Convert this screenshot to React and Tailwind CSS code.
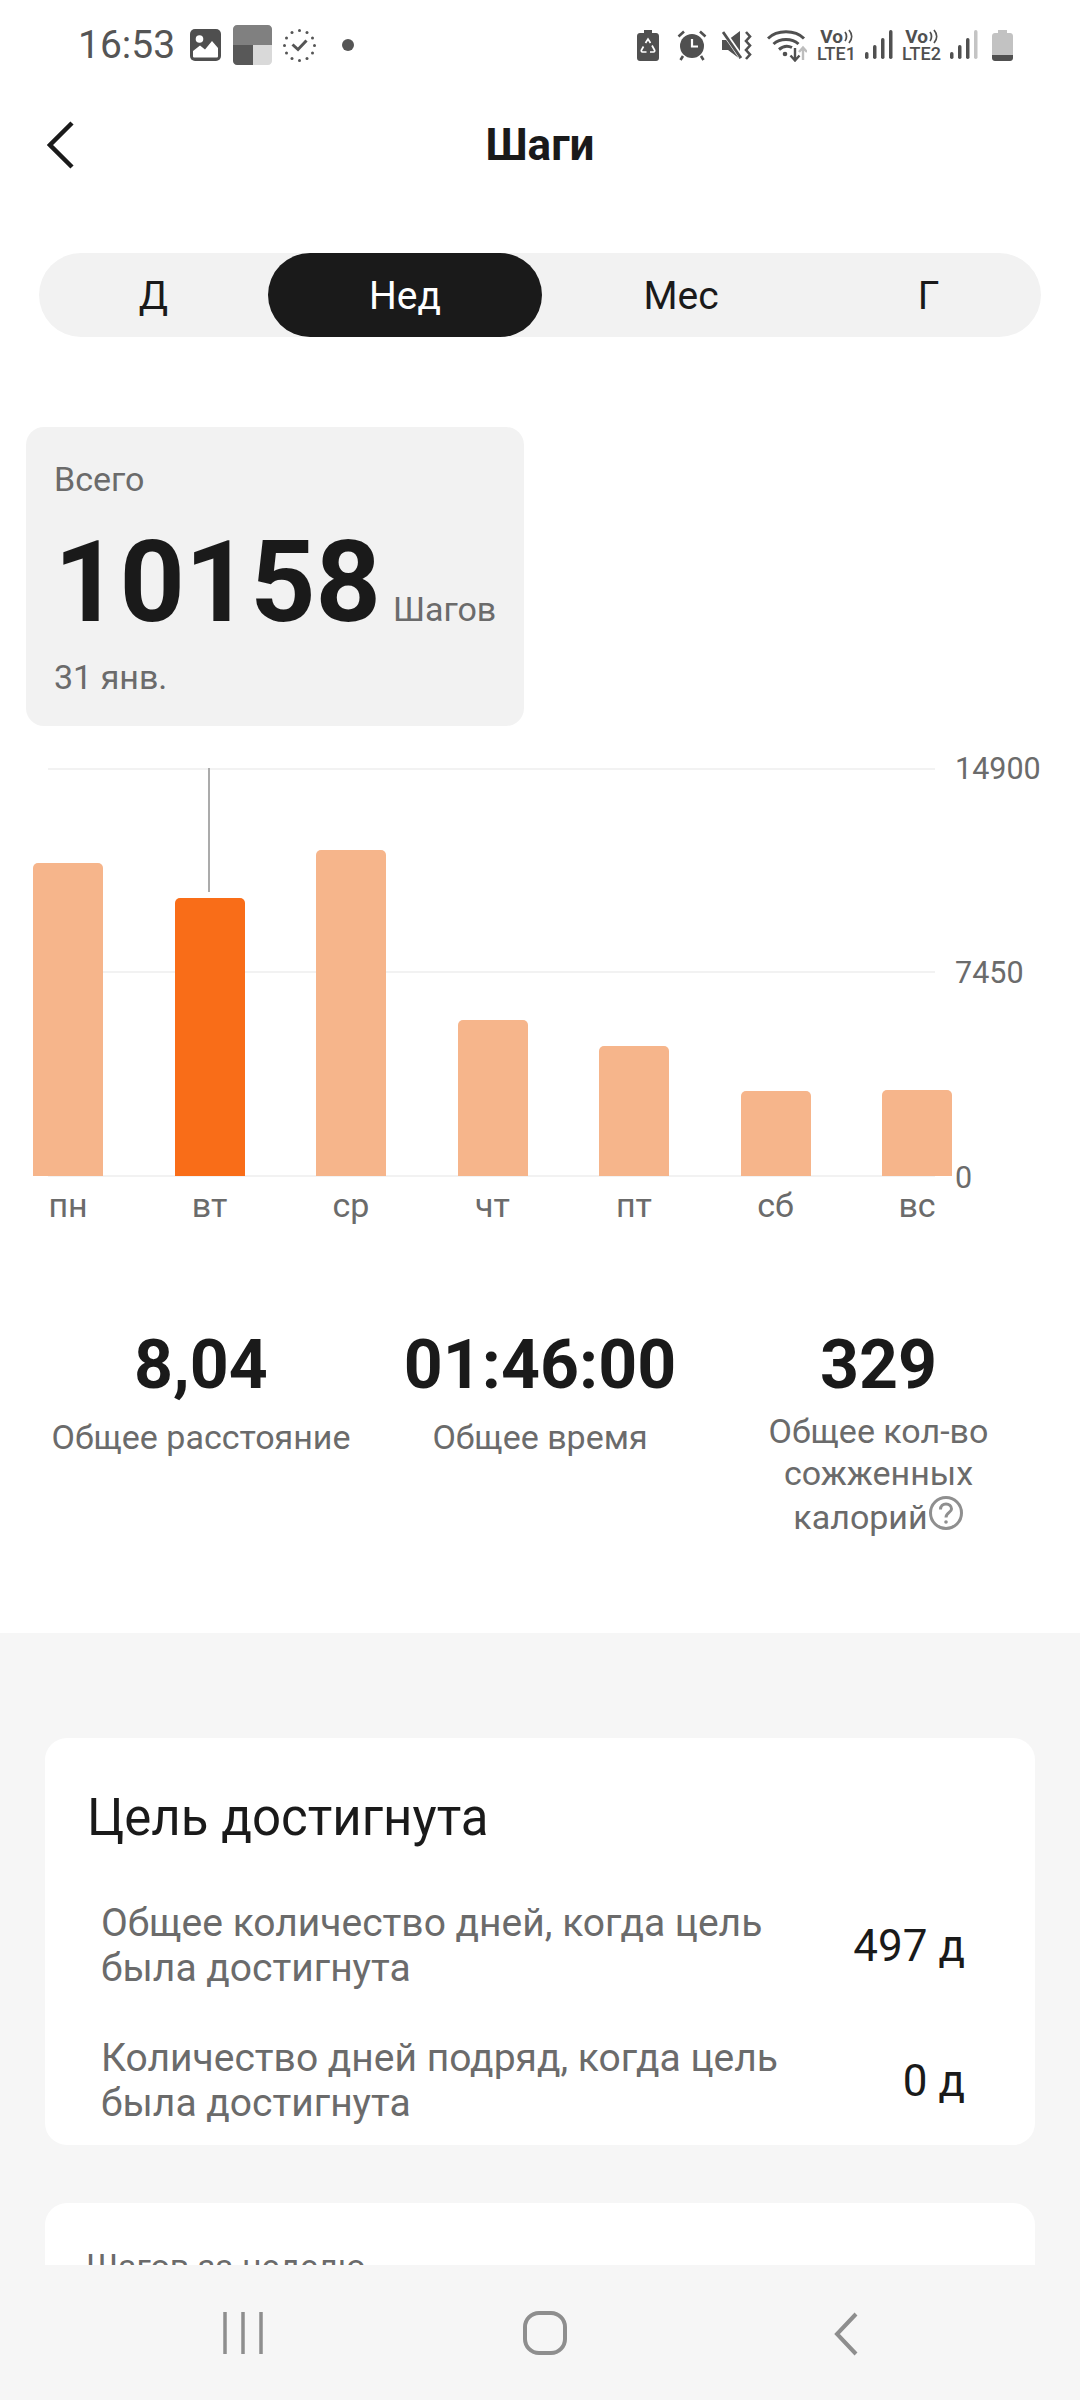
const bars = [
  { d: 'пн', h: 313 },
  { d: 'вт', h: 278, active: true },
  { d: 'ср', h: 326 },
  { d: 'чт', h: 156 },
  { d: 'пт', h: 130 },
  { d: 'сб', h: 85 },
  { d: 'вс', h: 86 },
];

function ImageIcon() {
  return (
    <svg width="31" height="32" viewBox="0 0 31 32">
      <rect width="31" height="32" rx="5" fill="#4f4f4f" />
      <circle cx="9.500" cy="10" r="3.800" fill="#fff" />
      <path d="M3 27.500V22L10 16.500L15 20.500L22 12L28 19V27C28 28 27.500 28.500 26.500 28.500H4.500C3.500 28.500 3 28 3 27.500Z" fill="#fff" />
    </svg>
  );
}

function WidgetIcon() {
  return (
    <svg width="39" height="40" viewBox="0 0 39 40">
      <path d="M0 20V4C0 1.800 1.800 0 4 0H35C37.200 0 39 1.800 39 4V20Z" fill="#808080" />
      <path d="M0 20H20V40H4C1.800 40 0 38.200 0 36Z" fill="#585858" />
      <path d="M20 20H39V36C39 38.200 37.200 40 35 40H20Z" fill="#d9d9d9" />
    </svg>
  );
}

function DottedClock() {
  const dots = Array.from({ length: 12 }, (_, i) => {
    const a = (i * Math.PI) / 6;
    return <circle key={i} cx={16.500 + 15 * Math.sin(a)} cy={16.500 - 15 * Math.cos(a)} r="1.500" fill="#555" />;
  });
  return (
    <svg width="33" height="33" viewBox="0 0 33 33">
      {dots}
      <path d="M9.500 15.500L15 20.500L23.500 11.500" fill="none" stroke="#555" strokeWidth="3" />
    </svg>
  );
}

function BatterySaver() {
  return (
    <svg width="22" height="31" viewBox="0 0 22 31">
      <path d="M7 0H15V3H19C20.700 3 22 4.300 22 6V28C22 29.700 20.700 31 19 31H3C1.300 31 0 29.700 0 28V6C0 4.300 1.300 3 3 3H7Z" fill="#505050" />
      <path d="M8.500 13L11 9L13.500 13M15 15.500L17.500 20C18 21 17.500 22 16.500 22H13M9.500 22H5.500C4.500 22 4 21 4.500 20L6.500 16.500" fill="none" stroke="#fff" strokeWidth="1.700" />
    </svg>
  );
}

function AlarmIcon() {
  return (
    <svg width="30" height="31" viewBox="0 0 30 31">
      <circle cx="15" cy="16" r="12" fill="#505050" />
      <path d="M15 9V16.500H21" fill="none" stroke="#fff" strokeWidth="2.200" />
      <path d="M1.500 6.500L7 1.500M28.500 6.500L23 1.500M6 26L3.500 30M24 26L26.500 30" fill="none" stroke="#505050" strokeWidth="2.600" />
    </svg>
  );
}

function MuteVibrate() {
  return (
    <svg width="30" height="30" viewBox="0 0 30 30">
      <path d="M0 10H6L18 1V29L6 20H0Z" fill="#505050" />
      <path d="M1 1L19 27" stroke="#fff" strokeWidth="5" />
      <path d="M1 2L19 28" stroke="#505050" strokeWidth="2.800" />
      <path d="M24 2L28 6.500L24 11L28 15.500L24 20L28 24.500L24 29" fill="none" stroke="#505050" strokeWidth="2.600" />
    </svg>
  );
}

function WifiIcon() {
  return (
    <svg width="40" height="33" viewBox="0 0 40 33">
      <path d="M1 9.500C10 0.500 28 0.500 37 9.500" fill="none" stroke="#505050" strokeWidth="3" />
      <path d="M6.500 15C13 9 25 9 31.500 15" fill="none" stroke="#505050" strokeWidth="3" />
      <path d="M12 20.500C16 17 21 16.500 25 18.500" fill="none" stroke="#505050" strokeWidth="3" />
      <circle cx="18" cy="25" r="2.300" fill="#505050" />
      <path d="M28 19V31M23.500 26.500L28 31.500L32.500 26.500" fill="none" stroke="#505050" strokeWidth="2.400" />
      <path d="M36 31V19M32 23L36 18.500L40 23" fill="none" stroke="#bdbdbd" strokeWidth="2.400" />
    </svg>
  );
}

function VoLte({ n }) {
  return (
    <div className="flex flex-col items-center text-[#505050] font-medium w-[39px]">
      <div className="flex items-center h-[15px] leading-[15px] text-[19px] font-bold">
        Vo
        <svg width="9" height="15" viewBox="0 0 9 15" className="ml-[1px]">
          <path d="M1 3C3 5.500 3 9.500 1 12M5 1C8.500 5 8.500 10 5 14" fill="none" stroke="#505050" strokeWidth="1.800" />
        </svg>
      </div>
      <div className="h-[14px] leading-[14px] text-[18px] mt-[3px] whitespace-nowrap">LTE{n}</div>
    </div>
  );
}

function SignalIcon({ faded }) {
  return (
    <svg width="28" height="30" viewBox="0 0 28 30">
      <rect x="0" y="22" width="3.500" height="7" rx="1.700" fill="#505050" />
      <rect x="8" y="15" width="3.500" height="14" rx="1.700" fill="#505050" />
      <rect x="16" y="8" width="3.500" height="21" rx="1.700" fill="#505050" />
      <rect x="24" y="0" width="3.500" height="29" rx="1.700" fill={faded ? '#c4c4c4' : '#505050'} />
    </svg>
  );
}

function BatteryIcon() {
  return (
    <svg width="21" height="31" viewBox="0 0 21 31">
      <path d="M6 0H15V3H18C19.700 3 21 4.300 21 6V25H0V6C0 4.300 1.300 3 3 3H6Z" fill="#c2c2c2" />
      <path d="M0 25H21V28C21 29.700 19.700 31 18 31H3C1.300 31 0 29.700 0 28Z" fill="#505050" />
    </svg>
  );
}

function StatusBar() {
  return (
    <div className="h-[90px] flex items-center justify-between pl-[78px] pr-[67px]">
      <div className="flex items-center">
        <span className="text-[39px] leading-none text-[#555] w-[112px]">16:53</span>
        <ImageIcon />
        <div className="w-[12px]" />
        <WidgetIcon />
        <div className="w-[11px]" />
        <DottedClock />
        <div className="w-[26px]" />
        <div className="w-[12px] h-[12px] rounded-full bg-[#555]" />
      </div>
      <div className="flex items-center">
        <BatterySaver />
        <div className="w-[18px]" />
        <AlarmIcon />
        <div className="w-[15px]" />
        <MuteVibrate />
        <div className="w-[15px]" />
        <WifiIcon />
        <div className="w-[10px]" />
        <VoLte n="1" />
        <div className="w-[9px]" />
        <SignalIcon />
        <div className="w-[9px]" />
        <VoLte n="2" />
        <div className="w-[9px]" />
        <SignalIcon faded />
        <div className="w-[14px]" />
        <BatteryIcon />
      </div>
    </div>
  );
}

function Header() {
  return (
    <div className="h-[110px] grid grid-cols-[1fr_auto_1fr] items-center pl-[47px]">
      <svg width="27" height="48" viewBox="0 0 27 48">
        <path d="M25 2L3 24L25 46" fill="none" stroke="#1a1a1a" strokeWidth="4.500" />
      </svg>
      <h1 className="text-[44px] font-bold leading-none text-[#1a1a1a] -ml-[47px]">Шаги</h1>
      <div />
    </div>
  );
}

function Segments() {
  return (
    <div className="mt-[53px] ml-[39px] w-[1002px] h-[84px] bg-[#f2f2f2] rounded-full flex text-[39px] text-[#1a1a1a]">
      <div className="w-[229px] flex items-center justify-center pt-[2px]">Д</div>
      <div className="w-[274px] flex items-center justify-center pt-[2px] bg-[#1a1a1a] text-white rounded-full">Нед</div>
      <div className="w-[278px] flex items-center justify-center pt-[2px]">Мес</div>
      <div className="w-[217px] flex items-center justify-center pt-[2px]">Г</div>
    </div>
  );
}

function TotalCard() {
  return (
    <div className="mt-[90px] ml-[26px] w-[498px] h-[299px] bg-[#f2f2f2] rounded-[18px] pl-[28px] pt-[31px] text-[#6b6b6b]">
      <div className="text-[34px] leading-[42px]">Всего</div>
      <div className="flex items-baseline mt-[26px] h-[112px]">
        <span className="text-[114px] leading-[112px] font-bold text-[#1a1a1a]">10158</span>
        <span className="text-[34px] ml-[12px]">Шагов</span>
      </div>
      <div className="text-[34px] leading-[42px] mt-[18px]">31 янв.</div>
    </div>
  );
}

function Chart() {
  return (
    <>
      <div className="relative mt-[42px] h-[408px] ml-[33px] w-[919px]">
        <div className="absolute left-[15px] top-0 w-[887px] h-[2px] bg-[#f2f2f2]" />
        <div className="absolute left-[15px] top-[203px] w-[887px] h-[2px] bg-[#f2f2f2]" />
        <div className="absolute left-[15px] top-[407px] w-[887px] h-[2px] bg-[#f2f2f2]" />
        <div className="absolute left-[175px] top-0 w-[2px] h-[124px] bg-[#ababab]" />
        <div className="absolute left-[922px] -top-[20px] text-[30.500px] leading-[42px] text-[#6b6b6b]">14900</div>
        <div className="absolute left-[922px] top-[184px] text-[30.500px] leading-[42px] text-[#6b6b6b]">7450</div>
        <div className="absolute left-[922px] top-[389px] text-[30.500px] leading-[42px] text-[#6b6b6b]">0</div>
        <div className="relative h-full flex items-end gap-[71.5px]">
          {bars.map((b) => (
            <div
              key={b.d}
              className={`w-[70px] rounded-t-[5px] ${b.active ? 'bg-[#f96d18]' : 'bg-[#f6b58b]'}`}
              style={{ height: b.h }}
            />
          ))}
        </div>
      </div>
      <div className="ml-[33px] mt-[8px] flex gap-[71.5px] text-[#6b6b6b] text-[34px] leading-[42px]">
        {bars.map((b) => (
          <div key={b.d} className="w-[70px] text-center">{b.d}</div>
        ))}
      </div>
    </>
  );
}

function Stats() {
  const big = 'text-[68px] leading-[68px] font-bold text-[#1a1a1a]';
  const small = 'text-[34px] text-[#6b6b6b]';
  return (
    <div className="h-[407px] px-[30px] pt-[105px] grid grid-cols-3 text-center items-start">
      <div className="pl-[2px]">
        <div className={big}>8,04</div>
        <div className={`${small} leading-[44px] mt-[16px]`}>Общее расстояние</div>
      </div>
      <div>
        <div className={big}>01:46:00</div>
        <div className={`${small} leading-[44px] mt-[16px]`}>Общее время</div>
      </div>
      <div className="pr-[3px]">
        <div className={big}>329</div>
        <div className={`${small} leading-[42px] mt-[11px]`}>
          <div>Общее кол-во</div>
          <div>сожженных</div>
          <div className="flex items-center justify-center mt-[2px]">
            калорий
            <svg width="36" height="36" viewBox="0 0 36 36" className="-mt-[8px]">
              <circle cx="18" cy="18" r="15.500" fill="none" stroke="#8f8f8f" strokeWidth="3" />
              <path d="M12.500 14.500C12.500 11 15 9 18 9C21 9 23.500 11 23.500 14C23.500 17.500 18 17.500 18 22.500" fill="none" stroke="#8f8f8f" strokeWidth="3" />
              <circle cx="18" cy="27" r="1.800" fill="#8f8f8f" />
            </svg>
          </div>
        </div>
      </div>
    </div>
  );
}

function GoalRow({ label, value, className }) {
  return (
    <div className={`flex items-center justify-between pl-[56px] pr-[70px] ${className}`}>
      <div className="text-[39px] leading-[45px] text-[#6b6b6b] whitespace-pre-line">{label}</div>
      <div className="text-[44px] text-[#1a1a1a] leading-none">{value}</div>
    </div>
  );
}

function GoalCard() {
  return (
    <div className="mx-[45px] h-[407px] bg-white rounded-[22px] pt-[52px] overflow-hidden">
      <div className="pl-[42px] text-[51px] leading-[56px] text-[#1a1a1a]">Цель достигнута</div>
      <GoalRow className="mt-[55px]" label={'Общее количество дней, когда цель\nбыла достигнута'} value="497 д" />
      <GoalRow className="mt-[45px]" label={'Количество дней подряд, когда цель\nбыла достигнута'} value="0 д" />
    </div>
  );
}

function NavBar() {
  return (
    <div className="h-[135px] bg-[#f6f6f6] relative flex items-start justify-between pl-[222px] pr-[222px] pt-[47px]">
      <svg width="42" height="42" viewBox="0 0 42 42">
        <path d="M3 0V42M21 0V42M39 0V42" fill="none" stroke="#8e8e8e" strokeWidth="3.500" />
      </svg>
      <svg width="44" height="44" viewBox="0 0 44 44" className="-ml-[8px] -mt-[1px]">
        <rect x="2" y="2" width="40" height="40" rx="14" fill="none" stroke="#8e8e8e" strokeWidth="4" />
      </svg>
      <svg width="24" height="44" viewBox="0 0 24 44">
        <path d="M22 2L3 22L22 42" fill="none" stroke="#8e8e8e" strokeWidth="4" />
      </svg>
    </div>
  );
}

export default function App() {
  return (
    <div className="w-[1080px] h-[2400px] bg-white flex flex-col overflow-hidden font-['Roboto',sans-serif]">
      <StatusBar />
      <Header />
      <Segments />
      <TotalCard />
      <Chart />
      <Stats />
      <div className="flex-1 min-h-0 bg-[#f6f6f6] pt-[105px] overflow-hidden">
        <GoalCard />
        <div className="mx-[45px] mt-[58px] h-[200px] bg-white rounded-[22px] pt-[43px] pl-[41px] text-[34px] leading-[40px] text-[#6b6b6b]">
          Шагов за неделю
        </div>
      </div>
      <NavBar />
    </div>
  );
}
